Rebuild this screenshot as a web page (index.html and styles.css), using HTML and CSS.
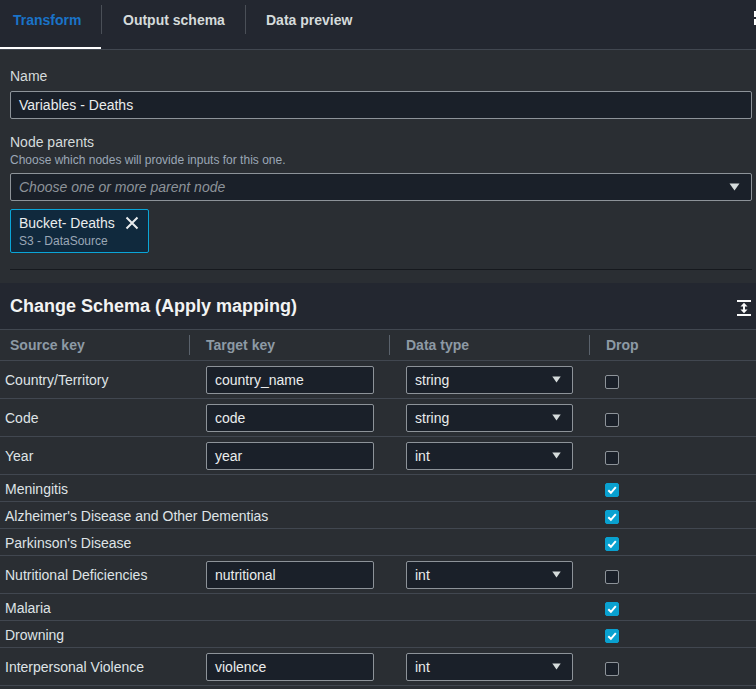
FILE: index.html
```html
<!DOCTYPE html>
<html>
<head>
<meta charset="utf-8">
<link rel="stylesheet" href="styles.css">
</head>
<body>
<div class="tabbar">
  <div class="tab tab-first active">Transform</div>
  <span class="tab-sep"></span>
  <div class="tab tab-second">Output schema</div>
  <span class="tab-sep"></span>
  <div class="tab tab-third">Data preview</div>
  <span class="edge-icon"><i></i><i></i></span>
</div>

<div class="form">
  <div class="label">Name</div>
  <div class="input">Variables - Deaths</div>

  <div class="label label-gap">Node parents</div>
  <div class="desc">Choose which nodes will provide inputs for this one.</div>
  <div class="input select-main">
    <span class="placeholder">Choose one or more parent node</span>
    <svg class="caret-big" width="11" height="8" viewBox="0 0 11 8"><path d="M0.5 0.5 H10.5 L5.5 7.5 Z" fill="#d5dbdb"/></svg>
  </div>

  <div class="chip">
    <div class="chip-title">
      <span>Bucket- Deaths</span>
      <svg width="14" height="14" viewBox="0 0 14 14"><path d="M1.5 1.5 L12.5 12.5 M12.5 1.5 L1.5 12.5" stroke="#e9ebed" stroke-width="2" fill="none"/></svg>
    </div>
    <div class="chip-sub">S3 - DataSource</div>
  </div>

  <div class="divider"></div>
</div>

<div class="section-head">
  <h2>Change Schema (Apply mapping)</h2>
  <svg class="expand" width="14" height="16" viewBox="0 0 14 16">
    <rect x="0" y="0" width="14" height="2" fill="#fafafa"/>
    <rect x="0" y="14" width="14" height="2" fill="#fafafa"/>
    <path d="M3.5 6.5 L7 2.8 L10.5 6.5 Z" fill="#fafafa"/>
    <rect x="6" y="5.5" width="2" height="5" fill="#fafafa"/>
    <path d="M3.5 9.5 L7 13.2 L10.5 9.5 Z" fill="#fafafa"/>
  </svg>
</div>

<div class="table">
  <div class="row head">
    <div class="cell c1">Source key</div>
    <div class="cell sep">Target key</div>
    <div class="cell sep">Data type</div>
    <div class="cell sep">Drop</div>
  </div>

  <div class="row tall">
    <div class="cell c1">Country/Territory</div>
    <div class="cell c2"><div class="field">country_name</div></div>
    <div class="cell c3"><div class="field dd">string<svg width="9" height="7" viewBox="0 0 9 7"><path d="M0.3 0.5 H8.7 L4.5 6.5 Z" fill="#d5dbdb"/></svg></div></div>
    <div class="cell c4"><span class="cb"></span></div>
  </div>

  <div class="row tall">
    <div class="cell c1">Code</div>
    <div class="cell c2"><div class="field">code</div></div>
    <div class="cell c3"><div class="field dd">string<svg width="9" height="7" viewBox="0 0 9 7"><path d="M0.3 0.5 H8.7 L4.5 6.5 Z" fill="#d5dbdb"/></svg></div></div>
    <div class="cell c4"><span class="cb"></span></div>
  </div>

  <div class="row tall">
    <div class="cell c1">Year</div>
    <div class="cell c2"><div class="field">year</div></div>
    <div class="cell c3"><div class="field dd">int<svg width="9" height="7" viewBox="0 0 9 7"><path d="M0.3 0.5 H8.7 L4.5 6.5 Z" fill="#d5dbdb"/></svg></div></div>
    <div class="cell c4"><span class="cb"></span></div>
  </div>

  <div class="row short">
    <div class="cell c1">Meningitis</div>
    <div class="cell c2"></div>
    <div class="cell c3"></div>
    <div class="cell c4"><span class="cb on"><svg width="14" height="14" viewBox="0 0 14 14"><path d="M3.3 7.2 L5.9 9.8 L10.8 4.2" stroke="#fff" stroke-width="2" fill="none"/></svg></span></div>
  </div>

  <div class="row short">
    <div class="cell c1">Alzheimer's Disease and Other Dementias</div>
    <div class="cell c2"></div>
    <div class="cell c3"></div>
    <div class="cell c4"><span class="cb on"><svg width="14" height="14" viewBox="0 0 14 14"><path d="M3.3 7.2 L5.9 9.8 L10.8 4.2" stroke="#fff" stroke-width="2" fill="none"/></svg></span></div>
  </div>

  <div class="row short">
    <div class="cell c1">Parkinson's Disease</div>
    <div class="cell c2"></div>
    <div class="cell c3"></div>
    <div class="cell c4"><span class="cb on"><svg width="14" height="14" viewBox="0 0 14 14"><path d="M3.3 7.2 L5.9 9.8 L10.8 4.2" stroke="#fff" stroke-width="2" fill="none"/></svg></span></div>
  </div>

  <div class="row tall">
    <div class="cell c1">Nutritional Deficiencies</div>
    <div class="cell c2"><div class="field">nutritional</div></div>
    <div class="cell c3"><div class="field dd">int<svg width="9" height="7" viewBox="0 0 9 7"><path d="M0.3 0.5 H8.7 L4.5 6.5 Z" fill="#d5dbdb"/></svg></div></div>
    <div class="cell c4"><span class="cb"></span></div>
  </div>

  <div class="row short">
    <div class="cell c1">Malaria</div>
    <div class="cell c2"></div>
    <div class="cell c3"></div>
    <div class="cell c4"><span class="cb on"><svg width="14" height="14" viewBox="0 0 14 14"><path d="M3.3 7.2 L5.9 9.8 L10.8 4.2" stroke="#fff" stroke-width="2" fill="none"/></svg></span></div>
  </div>

  <div class="row short">
    <div class="cell c1">Drowning</div>
    <div class="cell c2"></div>
    <div class="cell c3"></div>
    <div class="cell c4"><span class="cb on"><svg width="14" height="14" viewBox="0 0 14 14"><path d="M3.3 7.2 L5.9 9.8 L10.8 4.2" stroke="#fff" stroke-width="2" fill="none"/></svg></span></div>
  </div>

  <div class="row tall">
    <div class="cell c1">Interpersonal Violence</div>
    <div class="cell c2"><div class="field">violence</div></div>
    <div class="cell c3"><div class="field dd">int<svg width="9" height="7" viewBox="0 0 9 7"><path d="M0.3 0.5 H8.7 L4.5 6.5 Z" fill="#d5dbdb"/></svg></div></div>
    <div class="cell c4"><span class="cb"></span></div>
  </div>
</div>
</body>
</html>
```

FILE: styles.css
```css
* { box-sizing: border-box; }

html, body {
  margin: 0;
  padding: 0;
  background: #2a2e33;
  font-family: "Liberation Sans", Arial, sans-serif;
  font-size: 14px;
  color: #dfe3e6;
  overflow: hidden;
  height: 689px;
}

/* Tabs */
.tabbar {
  position: relative;
  display: flex;
  align-items: flex-start;
  background: #232730;
  border-bottom: 1px solid #414750;
  height: 50px;
}
.tab {
  height: 49px;
  padding-top: 12px;
  line-height: 16px;
  font-weight: 700;
  font-size: 14px;
  color: #d5dbdb;
  border-bottom: 2px solid transparent;
  white-space: nowrap;
}
.tab.active {
  color: #1a73c8;
  border-bottom-color: #ffffff;
}
.tab-first { width: 101px; padding-left: 13px; }
.tab-second { width: 143px; padding-left: 21px; }
.tab-third { padding-left: 20px; padding-right: 20px; }
.tab-sep {
  width: 1px;
  height: 29px;
  margin-top: 5px;
  background: #4a4f57;
  flex: none;
}
.edge-icon {
  position: absolute;
  right: 0;
  top: 11px;
  width: 2px;
  display: flex;
  flex-direction: column;
  gap: 2px;
}
.edge-icon i {
  display: block;
  width: 2px;
  height: 6px;
  background: #ffffff;
}

/* Form */
.form {
  padding: 16px 4px 13px 10px;
}
.label {
  line-height: 20px;
  color: #d5dbdb;
}
.label-gap { margin-top: 13px; }
.desc {
  font-size: 12px;
  line-height: 16px;
  color: #9ba7b6;
}
.input {
  margin-top: 5px;
  height: 28px;
  background: #1a2029;
  border: 1px solid #8d9399;
  border-radius: 2px;
  padding-left: 8px;
  display: flex;
  align-items: center;
  color: #eaeded;
}
.select-main {
  justify-content: space-between;
  padding-right: 11px;
}
.placeholder {
  font-style: italic;
  color: #8d9399;
}
.chip {
  margin-top: 8px;
  width: 139px;
  height: 44px;
  background: #10293d;
  border: 1px solid #0aa5d8;
  border-radius: 2px;
  padding: 3px 9px 2px 8px;
}
.chip-title {
  display: flex;
  justify-content: space-between;
  align-items: center;
  line-height: 20px;
  color: #eaeded;
}
.chip-sub {
  font-size: 12px;
  line-height: 17px;
  color: #9ba7b6;
}
.divider {
  margin-top: 16px;
  height: 1px;
  background: #16191e;
}

/* Section */
.section-head {
  display: flex;
  align-items: center;
  justify-content: space-between;
  background: #232730;
  padding: 12px 5px 12px 10px;
  border-bottom: 1px solid #414750;
}
.section-head h2 {
  margin: 0;
  font-size: 18px;
  line-height: 22px;
  font-weight: 700;
  color: #f2f3f3;
}
.expand { display: block; margin-top: 3px; }

/* Table */
.row {
  display: grid;
  grid-template-columns: 189px 200px 200px 1fr;
  border-bottom: 1px solid #414750;
}
.row.head { height: 31px; }
.row.tall { height: 38px; }
.row.short { height: 27px; }
.cell {
  display: flex;
  align-items: center;
  white-space: nowrap;
}
.head .cell {
  font-weight: 700;
  color: #8d9aa5;
}
.head .c1 { padding-left: 10px; }
.head .sep {
  border-left: 1px solid #5a626c;
  padding-left: 16px;
  margin: 5px 0 5px 0;
  height: 20px;
}
.c1 { padding-left: 5px; color: #dfe3e6; }
.short .c1 { padding-top: 2px; }
.c2 { padding-left: 17px; }
.c3 { padding-left: 17px; }
.c4 { padding-left: 16px; }
.field {
  height: 28px;
  background: #1a2029;
  border: 1px solid #8d9399;
  border-radius: 2px;
  padding-left: 8px;
  display: flex;
  align-items: center;
  color: #eaeded;
  width: 168px;
}
.field.dd {
  width: 167px;
  justify-content: space-between;
  padding-right: 11px;
}
.cb {
  display: block;
  width: 14px;
  height: 14px;
  margin-top: 4px;
  background: #1a2029;
  border: 1px solid #8d9399;
  border-radius: 2px;
}
.cb.on {
  background: #09a1d0;
  border-color: #09a1d0;
}
.cb svg { display: block; margin: -1px; }
```
